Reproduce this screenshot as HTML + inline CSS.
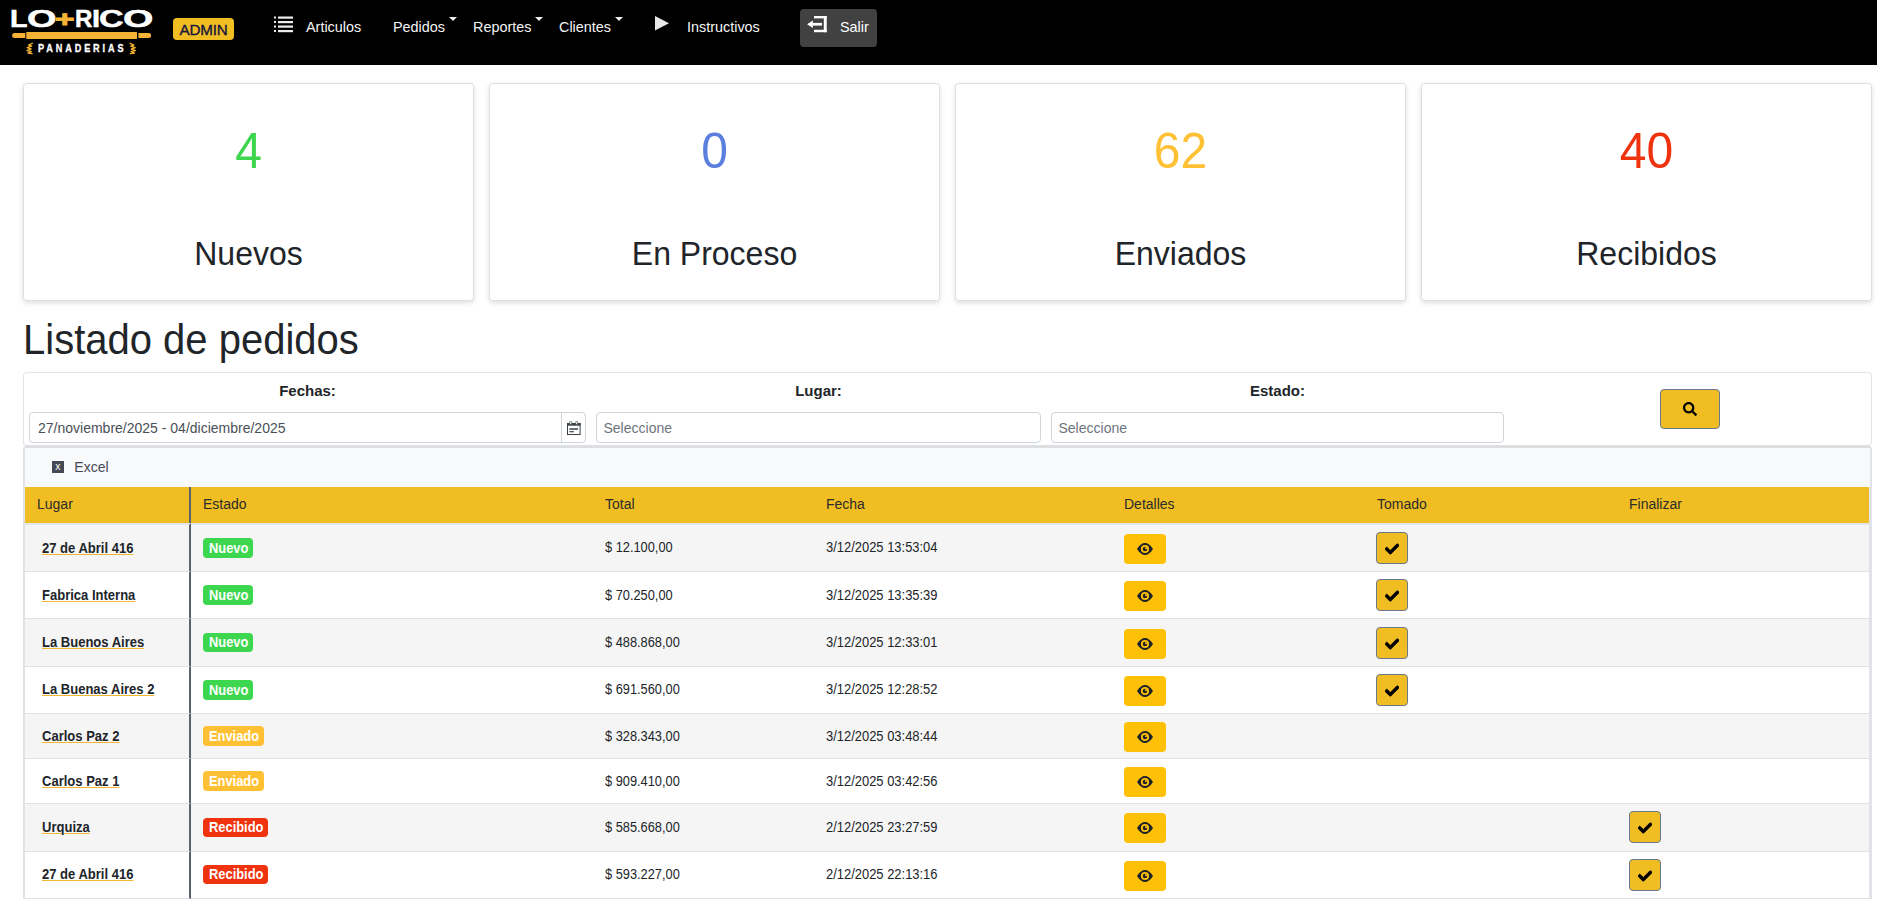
<!DOCTYPE html>
<html lang="es">
<head>
<meta charset="utf-8">
<title>Listado de pedidos</title>
<style>
*{box-sizing:border-box;}
html,body{margin:0;padding:0;}
body{width:1877px;height:899px;overflow:hidden;background:#fff;color:#212529;font-family:"Liberation Sans",sans-serif;font-size:14px;position:relative;}
a{color:inherit;}
/* NAVBAR */
.nav{position:absolute;left:0;top:0;width:1877px;height:65px;background:#000;color:#fff;}
.nav .logo{position:absolute;left:0;top:0;}
.brand{position:absolute;left:10.35px;top:6.59px;height:24px;line-height:24px;font-size:23.84px;font-weight:700;color:#fff;white-space:nowrap;-webkit-text-stroke:.5px #fff;}
.brand .g{display:inline-block;height:24px;vertical-align:top;}
.brand .g i{display:inline-block;font-style:normal;transform-origin:0 50%;}
.brand .pl{color:#f5b335;-webkit-text-stroke:.9px #f5b335;font-size:21.2px;position:relative;top:1.9px;left:-.7px;}
.brand2{position:absolute;left:37.6px;top:42.3px;height:12px;line-height:12px;font-size:11px;font-weight:700;color:#fff;white-space:nowrap;}
.brand2 span{display:inline-block;transform:scaleX(.83);transform-origin:0 50%;letter-spacing:3.46px;-webkit-text-stroke:.3px #fff;}
.nav .admin{position:absolute;left:173px;top:18px;width:61px;height:22px;background:#f0be23;border-radius:4px;color:#16163a;font-size:15.2px;line-height:23.6px;text-align:center;font-weight:400;letter-spacing:-.15px;-webkit-text-stroke:.35px #16163a;overflow:hidden;}
.nav .item{position:absolute;top:19px;font-size:14.4px;line-height:16px;color:#f4f4f4;white-space:nowrap;}
.nav .caret{position:absolute;top:17px;width:0;height:0;border-left:4px solid transparent;border-right:4px solid transparent;border-top:4px solid #eee;}
.nav .ico{position:absolute;}
.nav .salir{position:absolute;left:800px;top:9px;width:77px;height:38px;background:#414141;border-radius:4px;}
/* CARDS */
.card{position:absolute;top:83px;width:451px;height:218px;background:#fff;border:1px solid #dcdfe4;border-radius:3.5px;box-shadow:0 2px 5px rgba(0,0,0,.13);text-align:center;}
.card .num{position:absolute;left:0;right:0;top:40px;font-size:48px;line-height:56px;transform:scaleY(1.045);transform-origin:50% 79.5%;}
.card .lbl{position:absolute;left:0;right:0;top:151px;font-size:32px;line-height:38px;color:#212529;transform:scaleY(1.045);transform-origin:50% 79.2%;}
h1{position:absolute;left:23px;top:316px;margin:0;font-size:40px;line-height:48px;font-weight:400;color:#212529;transform:scaleY(1.045);transform-origin:0 78.9%;}
/* FILTER */
.filter{position:absolute;left:23px;top:372px;width:1849px;height:74px;border:1px solid #e3e5e8;border-bottom-color:#dddfe2;border-radius:4px;background:#fff;}
.flabel{position:absolute;top:9px;font-weight:700;font-size:15px;line-height:18px;color:#212529;text-align:center;}
.inp{position:absolute;top:39px;height:31px;border:1px solid #ced4da;border-radius:4px;background:#fff;font-size:14px;line-height:31px;color:#495057;padding-left:8px;white-space:nowrap;}
.inp.ph{color:#6c757d;padding-left:6.5px;}
.btn-search{position:absolute;left:1636px;top:16px;width:60px;height:40px;background:#f0be23;border:1px solid #6a7689;border-radius:4px;}
/* TABLE */
.twrap{position:absolute;left:23px;top:446px;width:1849px;height:460px;background:#f8f9fa;border:2px solid #e1e3e8;border-top-color:#dcdee1;border-right-width:2px;border-radius:3px;}
.excel{position:absolute;left:49.3px;top:10.7px;font-size:14px;line-height:16px;color:#454b54;}
.excel .xi{position:absolute;left:-22.5px;top:2.3px;width:12px;height:12px;background:#444a55;color:#fff;font-size:10.5px;line-height:10.5px;text-align:center;font-weight:400;border-radius:0;}
table{position:absolute;left:0px;top:39px;border-collapse:separate;border-spacing:0;width:1845px;border-right:1px solid #e1e3e8;table-layout:fixed;font-size:14px;}
.t{display:inline-block;transform:scaleX(.93);transform-origin:0 50%;white-space:nowrap;position:relative;}
.t.m{transform:scaleX(.915);}
.t.d{transform:scaleX(.924);}
tr.first .t{top:-1px;}
tr.first a.t{top:-0.5px;}
tr.u1 .t{top:-1px;}
tr.b19 .bdg{height:19px;line-height:19px;position:relative;top:-0.5px;}
th{background:#f0be23;height:36px;text-align:left;font-weight:400;font-size:14px;color:#2b2b2b;padding:0 0 3px 12px;}
td{padding:0 0 0 12px;vertical-align:middle;border-bottom:1px solid #dee2e6;color:#212529;}
tr.o td{background:#f5f5f5;}
tr.e td{background:#fff;}
tr.first td{border-top:2px solid #e2e6ea;}
th.c1,td.c1{border-right:2px solid #5a636d;}
td.c1{padding-left:17px;}
td.c1 a{font-weight:700;color:#212529;text-decoration:underline;text-decoration-color:#f2b632;text-underline-offset:0.5px;text-decoration-thickness:1px;}
.bdg{display:inline-block;height:20px;line-height:20px;padding:0 0 0 5.5px;border-radius:4px;color:#fff;font-weight:700;font-size:14px;vertical-align:middle;white-space:nowrap;}
.bdg b{display:inline-block;transform:scaleX(.92);transform-origin:0 50%;font-weight:700;}
.b-n{background:#3dd64f;width:50px;}
.b-e{background:#ffc133;width:61px;}
.b-r{background:#f0330f;width:65px;}
.eye{display:block;width:42px;height:30px;background:#ffc107;border-radius:4px;position:relative;top:1px;}
.chk{display:block;width:32px;height:32px;background:#f0be23;border:1px solid #6a7689;border-radius:4px;}
.eye svg{position:absolute;left:13px;top:9px;}
.chk{position:relative;}
.chk svg{position:absolute;left:8px;top:9px;overflow:visible;}
td.tm .chk{margin-left:-1px;}
tr.r7 .eye{top:0;}
tr.r7 .chk{top:-1px;}
</style>
</head>
<body>
<svg width="0" height="0" style="position:absolute">
  <defs>
    <symbol id="i-eye" viewBox="0 0 16 12"><path fill-rule="evenodd" d="M0 6C2.600 1.700 5.400 0 8 0S13.400 1.700 16 6C13.400 10.300 10.600 12 8 12S2.600 10.300 0 6ZM8 1.900a4.100 4.100 0 1 0 0 8.200a4.100 4.100 0 1 0 0-8.200ZM8 3.700a2.300 2.300 0 1 1 0 4.600a2.300 2.300 0 1 1 0-4.600ZM9 3.900a1.150 1.150 0 1 0 0 2.300a1.150 1.150 0 1 0 0-2.300Z"/></symbol>
    <symbol id="i-chk" viewBox="0 0 512 512"><path d="M173.898 439.404l-166.4-166.4c-9.997-9.997-9.997-26.206 0-36.204l36.203-36.204c9.997-9.998 26.207-9.998 36.204 0L192 312.69 432.095 72.596c9.997-9.997 26.207-9.997 36.204 0l36.203 36.204c9.997 9.997 9.997 26.206 0 36.204l-294.4 294.401c-9.998 9.997-26.207 9.997-36.204-.001z"/></symbol>
    <symbol id="i-search" viewBox="0 0 512 512"><path d="M505 442.7L405.3 343c-4.500-4.500-10.600-7-17-7H372c27.600-35.300 44-79.700 44-128C416 93.100 322.900 0 208 0S0 93.100 0 208s93.100 208 208 208c48.300 0 92.700-16.400 128-44v16.300c0 6.400 2.500 12.500 7 17l99.700 99.700c9.400 9.400 24.600 9.400 33.900 0l28.300-28.300c9.400-9.400 9.400-24.600.100-34zM208 336c-70.700 0-128-57.200-128-128 0-70.700 57.200-128 128-128 70.700 0 128 57.200 128 128 0 70.700-57.200 128-128 128z"/></symbol>
  </defs>
</svg>

<div class="nav">
  <div class="brand"><span class="g" style="width:16.25px"><i style="transform:scaleX(1.205)">L</i></span><span class="g" style="width:28.82px"><i style="transform:scaleX(1.597)">O</i></span><span class="g pl" style="width:19.6px"><i style="transform:scaleX(1.57)">+</i></span><span class="g" style="width:17px"><i style="transform:scaleX(1.01)">R</i></span><span class="g" style="width:7.21px"><i style="transform:scaleX(1.224)">I</i></span><span class="g" style="width:23.84px"><i style="transform:scaleX(1.428)">C</i></span><span class="g" style="width:30px"><i style="transform:scaleX(1.638)">O</i></span></div>
  <div class="brand2"><span>PANADERIAS</span></div>
  <svg class="logo" width="165" height="65" viewBox="0 0 165 65">
    <g fill="#f5b335">
      <path d="M14.600 33.100H25.300V38.100H14.600A2.500 2.500 0 0 1 14.600 33.100Z"/>
      <rect x="26.300" y="32" width="110.700" height="6.900" rx="0.600"/>
      <path d="M138.400 33.100H148.600A2.500 2.500 0 0 1 148.600 38.100H138.400Z"/>
    </g>
    <g stroke="#f5b335" stroke-width="1.350" stroke-linecap="round" stroke-linejoin="round" fill="none">
      <path d="M32.3 43.3L28.6 45.0L31.6 46.2L27.2 47.7L31.0 49.0L27.0 50.6L31.4 51.7L28.0 53.2L32.0 53.7"/>
      <path d="M130.1 43.3L133.8 45.0L130.8 46.2L135.2 47.7L131.4 49.0L135.4 50.6L131.0 51.7L134.4 53.2L130.4 53.7"/>
    </g>
  </svg>
  <div class="admin">ADMIN</div>

  <svg class="ico" style="left:274px;top:16px" width="19" height="17" viewBox="0 0 19 17">
    <g fill="#eee">
      <rect x="0" y="0.5" width="2" height="2"/><rect x="4" y="0.5" width="15" height="2.2"/>
      <rect x="0" y="5" width="2" height="2"/><rect x="4" y="5" width="15" height="2.2"/>
      <rect x="0" y="9.5" width="2" height="2"/><rect x="4" y="9.5" width="15" height="2.2"/>
      <rect x="0" y="14" width="2" height="2"/><rect x="4" y="14" width="15" height="2.2"/>
    </g>
  </svg>
  <span class="item" style="left:306px">Articulos</span>
  <span class="item" style="left:393px">Pedidos</span><i class="caret" style="left:449px"></i>
  <span class="item" style="left:473px">Reportes</span><i class="caret" style="left:535px"></i>
  <span class="item" style="left:559px">Clientes</span><i class="caret" style="left:615px"></i>
  <svg class="ico" style="left:655px;top:16px" width="14" height="15" viewBox="0 0 14 15"><path d="M0 0 L14 7.3 L0 14.6 Z" fill="#e8e8e8"/></svg>
  <span class="item" style="left:687px">Instructivos</span>
  <div class="salir">
    <svg class="ico" style="left:0;top:0" width="40" height="38" viewBox="0 0 40 38"><g fill="#fff"><rect x="14" y="7" width="12.700" height="2.400"/><rect x="14" y="20.800" width="12.700" height="2.400"/><rect x="23.800" y="7" width="2.900" height="16.200"/><rect x="12.500" y="13.900" width="9.500" height="2.700"/><path d="M7.100 15.250L12.900 11.500V19Z"/></g></svg>
    <span class="item" style="left:40px;top:10px;color:#fff">Salir</span>
  </div>
</div>

<div class="card" style="left:23px"><div class="num" style="color:#3dd64f">4</div><div class="lbl">Nuevos</div></div>
<div class="card" style="left:489px"><div class="num" style="color:#5b7fde">0</div><div class="lbl">En Proceso</div></div>
<div class="card" style="left:955px"><div class="num" style="color:#ffc133">62</div><div class="lbl">Enviados</div></div>
<div class="card" style="left:1421px"><div class="num" style="color:#f0330f">40</div><div class="lbl">Recibidos</div></div>

<h1>Listado de pedidos</h1>

<div class="filter">
  <div class="flabel" style="left:5px;width:557px">Fechas:</div>
  <div class="flabel" style="left:572px;width:445px">Lugar:</div>
  <div class="flabel" style="left:1027px;width:453px">Estado:</div>
  <div class="inp" style="left:5px;width:557px">27/noviembre/2025 - 04/diciembre/2025
    <span style="position:absolute;right:0;top:0;width:24px;height:29px;border-left:1px solid #ced4da;">
      <svg style="position:absolute;left:5px;top:8px" width="14" height="14" viewBox="0 0 14 14"><rect x=".5" y="2.500" width="12.600" height="11" fill="none" stroke="#3a4047" stroke-width="1"/><rect x="0" y="2.200" width="13.600" height="2.500" fill="#3a4047"/><rect x="2.700" y=".300" width="2" height="3.300" rx=".800" fill="#e6f2e6" stroke="#3a4047" stroke-width=".600"/><rect x="8.700" y=".300" width="2" height="3.300" rx=".800" fill="#e6f2e6" stroke="#3a4047" stroke-width=".600"/><rect x="2.400" y="7.300" width="8.600" height="1.500" fill="#3a4047"/><rect x="2.400" y="10.100" width="4.400" height="1.200" fill="#3a4047"/></svg>
    </span>
  </div>
  <div class="inp ph" style="left:572px;width:445px">Seleccione</div>
  <div class="inp ph" style="left:1027px;width:453px">Seleccione</div>
  <div class="btn-search">
    <svg style="position:absolute;left:22px;top:11.5px" width="14" height="14" fill="#000"><use href="#i-search"/></svg>
  </div>
</div>

<div class="twrap">
  <div class="excel"><span class="xi">x</span>Excel</div>
  <table>
    <colgroup><col style="width:166px"><col style="width:402px"><col style="width:221px"><col style="width:298px"><col style="width:253px"><col style="width:252px"><col></colgroup>
    <thead><tr><th class="c1">Lugar</th><th>Estado</th><th>Total</th><th>Fecha</th><th>Detalles</th><th>Tomado</th><th>Finalizar</th></tr></thead>
    <tbody>
      <tr class="o first" style="height:49px"><td class="c1"><a class="t">27 de Abril 416</a></td><td><span class="bdg b-n"><b>Nuevo</b></span></td><td><span class="t m">$ 12.100,00</span></td><td><span class="t d">3/12/2025 13:53:04</span></td><td><span class="eye"><svg width="16" height="12" fill="#1d2128"><use href="#i-eye"/></svg></span></td><td class="tm"><span class="chk"><svg width="14" height="14" fill="#000" stroke="#000" stroke-width="34" stroke-linejoin="miter"><use href="#i-chk"/></svg></span></td><td></td></tr>
      <tr class="e" style="height:47px"><td class="c1"><a class="t">Fabrica Interna</a></td><td><span class="bdg b-n"><b>Nuevo</b></span></td><td><span class="t m">$ 70.250,00</span></td><td><span class="t d">3/12/2025 13:35:39</span></td><td><span class="eye"><svg width="16" height="12" fill="#1d2128"><use href="#i-eye"/></svg></span></td><td class="tm"><span class="chk"><svg width="14" height="14" fill="#000" stroke="#000" stroke-width="34" stroke-linejoin="miter"><use href="#i-chk"/></svg></span></td><td></td></tr>
      <tr class="o u1 b19" style="height:48px"><td class="c1"><a class="t">La Buenos Aires</a></td><td><span class="bdg b-n"><b>Nuevo</b></span></td><td><span class="t m">$ 488.868,00</span></td><td><span class="t d">3/12/2025 12:33:01</span></td><td><span class="eye"><svg width="16" height="12" fill="#1d2128"><use href="#i-eye"/></svg></span></td><td class="tm"><span class="chk"><svg width="14" height="14" fill="#000" stroke="#000" stroke-width="34" stroke-linejoin="miter"><use href="#i-chk"/></svg></span></td><td></td></tr>
      <tr class="e u1" style="height:47px"><td class="c1"><a class="t">La Buenas Aires 2</a></td><td><span class="bdg b-n"><b>Nuevo</b></span></td><td><span class="t m">$ 691.560,00</span></td><td><span class="t d">3/12/2025 12:28:52</span></td><td><span class="eye"><svg width="16" height="12" fill="#1d2128"><use href="#i-eye"/></svg></span></td><td class="tm"><span class="chk"><svg width="14" height="14" fill="#000" stroke="#000" stroke-width="34" stroke-linejoin="miter"><use href="#i-chk"/></svg></span></td><td></td></tr>
      <tr class="o" style="height:45px"><td class="c1"><a class="t">Carlos Paz 2</a></td><td><span class="bdg b-e"><b>Enviado</b></span></td><td><span class="t m">$ 328.343,00</span></td><td><span class="t d">3/12/2025 03:48:44</span></td><td><span class="eye"><svg width="16" height="12" fill="#1d2128"><use href="#i-eye"/></svg></span></td><td></td><td></td></tr>
      <tr class="e" style="height:45px"><td class="c1"><a class="t">Carlos Paz 1</a></td><td><span class="bdg b-e"><b>Enviado</b></span></td><td><span class="t m">$ 909.410,00</span></td><td><span class="t d">3/12/2025 03:42:56</span></td><td><span class="eye"><svg width="16" height="12" fill="#1d2128"><use href="#i-eye"/></svg></span></td><td></td><td></td></tr>
      <tr class="o u1 b19 r7" style="height:48px"><td class="c1"><a class="t">Urquiza</a></td><td><span class="bdg b-r"><b>Recibido</b></span></td><td><span class="t m">$ 585.668,00</span></td><td><span class="t d">2/12/2025 23:27:59</span></td><td><span class="eye"><svg width="16" height="12" fill="#1d2128"><use href="#i-eye"/></svg></span></td><td></td><td><span class="chk"><svg width="14" height="14" fill="#000" stroke="#000" stroke-width="34" stroke-linejoin="miter"><use href="#i-chk"/></svg></span></td></tr>
      <tr class="e u1 b19" style="height:47px"><td class="c1"><a class="t">27 de Abril 416</a></td><td><span class="bdg b-r"><b>Recibido</b></span></td><td><span class="t m">$ 593.227,00</span></td><td><span class="t d">2/12/2025 22:13:16</span></td><td><span class="eye"><svg width="16" height="12" fill="#1d2128"><use href="#i-eye"/></svg></span></td><td></td><td><span class="chk"><svg width="14" height="14" fill="#000" stroke="#000" stroke-width="34" stroke-linejoin="miter"><use href="#i-chk"/></svg></span></td></tr>
    </tbody>
  </table>
</div>

</body>
</html>
